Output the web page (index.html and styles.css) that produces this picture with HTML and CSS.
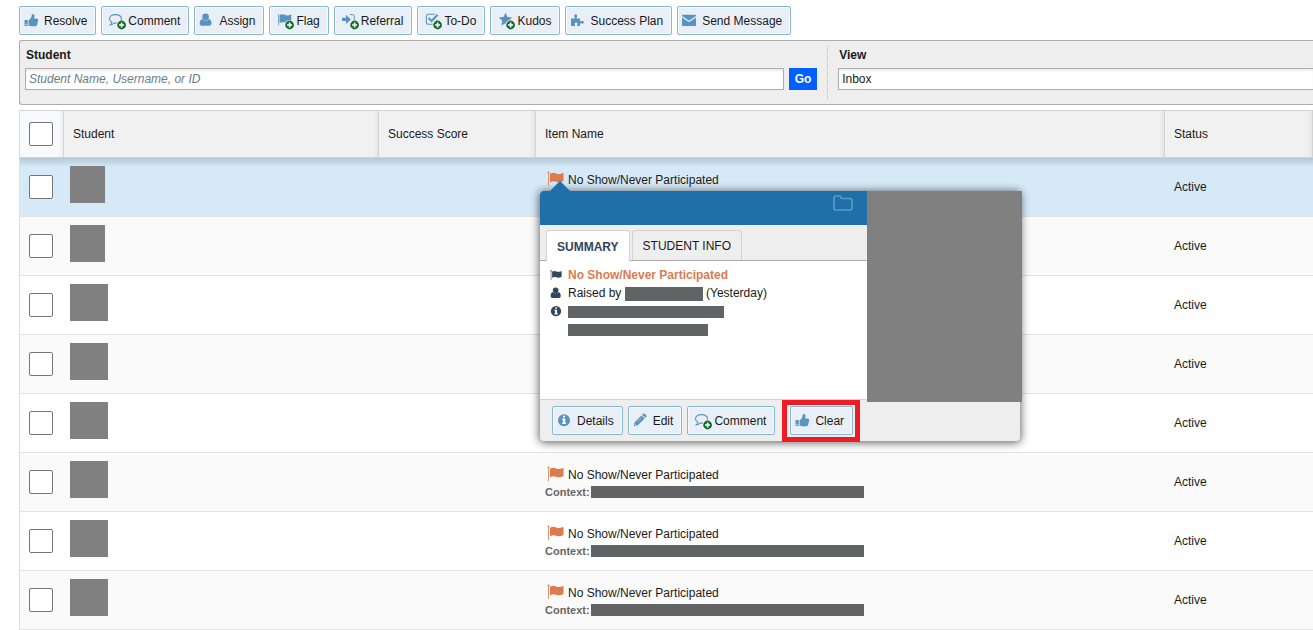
FILE: index.html
```html
<!DOCTYPE html>
<html lang="en">
<head>
  <meta charset="utf-8">
  <title>Tracking Items</title>
  <link rel="stylesheet" href="styles.css">
</head>
<body>

  <!-- Icon sprite -->
  <svg class="sprite" aria-hidden="true">
    <symbol id="i-thumb" viewBox="0 0 20 19">
      <path d="M.5 9.100h3.200v5.900H.5zM4.600 8.900C6.400 8.400 7 6.500 7.500 5.400 7.700 4.100 8 3.100 8.900 3.100c1.500 0 2 1.500 1.500 2.900l-.5 1.500h2.700c1.200 0 1.700.9 1.500 1.900l-1 4.300c-.2.900-.8 1.500-1.700 1.500H8.400c-1.500 0-2.300-.7-3.800-.8z"/>
      <circle cx="1.900" cy="13.500" r=".7" fill="#e8eff6"/>
    </symbol>
    <symbol id="i-user" viewBox="0 0 20 19">
      <circle cx="6.600" cy="5.900" r="3.300"/>
      <path d="M3.400 7.900c1.700 2 4.700 2 6.400 0 1.800.4 2.700 2.300 2.700 4.600 0 1.400-.8 2.200-2 2.200H2.700c-1.200 0-2-.8-2-2.200 0-2.300.9-4.200 2.700-4.600z"/>
    </symbol>
    <symbol id="i-puzzle" viewBox="0 0 20 19">
      <path d="M1 7.500h3.400c.5 0 .5-.5.3-1-.9-1.400-.3-3.200 1-3.200s1.900 1.800 1 3.200c-.2.500-.2 1 .3 1h3v2.500c0 .5.400.5.900.3 1.300-.8 3-.3 3 1s-1.700 1.900-3 1c-.5-.2-.9-.2-.9.300V15H7.300c-.4 0-.4-.4-.2-.8.700-1.300.3-2.600-1-2.600s-1.700 1.300-1 2.600c.2.400.2.800-.2.800H1z"/>
    </symbol>
    <symbol id="i-mail" viewBox="0 0 20 19">
      <path d="M0 5C0 4.200.5 3.700 1.200 3.700h11.600c.7 0 1.200.5 1.200 1.300L7.700 9.300c-.4.300-1 .3-1.400 0zM0 6.400l5.900 4.100c.7.500 1.500.5 2.200 0L14 6.400v7.300c0 .8-.5 1.300-1.200 1.300H1.200c-.7 0-1.200-.5-1.200-1.300z"/>
    </symbol>
    <symbol id="i-info" viewBox="0 0 20 19">
      <circle cx="7" cy="9.200" r="6"/>
      <path d="M6 4.800h2.200v1.700H6zM5.200 7.600h3v4H9V13H5.200v-1.400H6V9h-.8z" fill="#fff"/>
    </symbol>
    <symbol id="i-pencil" viewBox="0 0 20 19">
      <path d="M.8 15.200l.9-4 6.800-6.800 3.100 3.100-6.800 6.800zM9.200 3.700l.9-.9c.5-.5 1.100-.5 1.600 0l1.500 1.500c.5.5.5 1.100 0 1.600l-.9.900z"/>
      <path d="M4 11.200l4.500-4.500" stroke="#e8eff6" stroke-width=".5" fill="none"/>
      <path d="M1.900 12.900l1.200 1.200" stroke="#e8eff6" stroke-width=".8" fill="none"/>
    </symbol>
    <symbol id="i-plus" viewBox="0 0 22 19">
      <circle cx="15.600" cy="14" r="5" fill="#fff"/>
      <circle cx="15.600" cy="14" r="4.400" fill="#17692d"/>
      <path d="M13.100 14h5M15.600 11.500v5" stroke="#fff" stroke-width="1.600"/>
    </symbol>
    <symbol id="i-comment" viewBox="0 0 22 19">
      <path d="M9.500 3.600c-3.400 0-6 1.800-6 4.200 0 1.500 1 2.700 2.500 3.400-.2 1.100-.8 2-1.700 2.700 1.700-.1 3-.8 3.900-1.900 4.300.5 7.300-1.500 7.300-4.200 0-2.400-2.500-4.200-6-4.200z" fill="none" stroke="currentColor" stroke-width="1.100"/>
    </symbol>
    <symbol id="i-flag-sm" viewBox="0 0 22 19">
      <path d="M4 3h.9v11.500H4z" opacity=".8"/>
      <path d="M5.500 4.100c2.200-1.200 4-.9 5.800-.1 1.800.8 3.400.5 5.900-.8V11c-2.400 1.200-4.200 1.400-6 .6-1.800-.7-3.400-.7-5.700.5z"/>
    </symbol>
    <symbol id="i-signin" viewBox="0 0 22 19">
      <path d="M3 6.700h4V3.800l4.900 4.600L7 13v-2.900H3z"/>
      <path d="M11 3.600h2.800c.9 0 1.500.6 1.500 1.500v6.700c0 .9-.6 1.500-1.500 1.500H11" fill="none" stroke="currentColor" stroke-width="1"/>
    </symbol>
    <symbol id="i-check" viewBox="0 0 22 19">
      <path d="M14.500 8.600v3c0 1-.7 1.700-1.700 1.700H6.100c-1 0-1.700-.7-1.700-1.700V4.900c0-1 .7-1.700 1.700-1.700h6.700" fill="none" stroke="currentColor" stroke-width="1.100"/>
      <path d="M6.500 7l3.100 3 6-6.200" fill="none" stroke="currentColor" stroke-width="2"/>
    </symbol>
    <symbol id="i-star" viewBox="0 0 22 19">
      <path d="M10.500 1.800l2 4.200 4.600.6-3.400 3.200.8 4.600-4-2.200-4.100 2.200.8-4.600-3.300-3.200 4.600-.6z"/>
    </symbol>
    <symbol id="i-flag" viewBox="0 0 17 15">
      <circle cx="1.500" cy="1.500" r="1.100" opacity=".8"/>
      <path d="M1 1.500h1V15H1z" opacity=".8"/>
      <path d="M3 2.700c2.400-1.400 4.200-1.200 6-.3 2.200 1 4.500.8 7.500-.6v8.300c-2.900 1.400-5.300 1.600-7.500.6-1.800-.8-3.600-.8-6 .6z"/>
    </symbol>
    <symbol id="i-folder" viewBox="0 0 20 16">
      <path d="M1 3c0-1.100.9-2 2-2h3.200c1.100 0 1.700.9 1.700 2 0 .3.200.5.500.5H17c1.100 0 2 .9 2 2V13c0 1.100-.9 2-2 2H3c-1.100 0-2-.9-2-2z" fill="none" stroke="currentColor" stroke-width="1.700"/>
    </symbol>
  </svg>

  <main class="page">

    <!-- Action buttons -->
    <div class="toolbar">
      <button class="btn"><svg class="icon"><use href="#i-thumb"/></svg>Resolve</button>
      <button class="btn"><svg class="icon icon-add"><use href="#i-comment"/><use href="#i-plus"/></svg>Comment</button>
      <button class="btn"><svg class="icon"><use href="#i-user"/></svg>Assign</button>
      <button class="btn"><svg class="icon icon-add"><use href="#i-flag-sm"/><use href="#i-plus"/></svg>Flag</button>
      <button class="btn"><svg class="icon icon-add"><use href="#i-signin"/><use href="#i-plus"/></svg>Referral</button>
      <button class="btn"><svg class="icon icon-add"><use href="#i-check"/><use href="#i-plus"/></svg>To-Do</button>
      <button class="btn"><svg class="icon icon-add"><use href="#i-star"/><use href="#i-plus"/></svg>Kudos</button>
      <button class="btn"><svg class="icon"><use href="#i-puzzle"/></svg>Success Plan</button>
      <button class="btn"><svg class="icon"><use href="#i-mail"/></svg>Send Message</button>
    </div>

    <!-- Filters -->
    <form class="filters">
      <div class="filter">
        <label for="student">Student</label>
        <div class="search">
          <input type="text" id="student" placeholder="Student Name, Username, or ID">
          <button type="button" class="go-btn">Go</button>
        </div>
      </div>
      <div class="filter filter-view">
        <label for="view">View</label>
        <select id="view">
          <option>Inbox</option>
        </select>
      </div>
    </form>

    <!-- Items -->
    <table class="items">
      <colgroup>
        <col class="col-check">
        <col class="col-student">
        <col class="col-score">
        <col>
        <col class="col-status">
      </colgroup>
      <thead>
        <tr>
          <th class="check"><input type="checkbox" aria-label="Select all"></th>
          <th>Student</th>
          <th>Success Score</th>
          <th>Item Name</th>
          <th>Status</th>
        </tr>
      </thead>
      <tbody>
        <tr class="selected">
          <td class="check"><input type="checkbox" aria-label="Select row 1"></td>
          <td class="student"><div class="photo photo-small"></div></td>
          <td></td>
          <td class="item">
            <div class="item-name"><svg class="flag"><use href="#i-flag"/></svg>No Show/Never Participated</div>

            <!-- Flag card -->
            <div class="card">
              <div class="card-main">
                <div class="card-header"><svg class="folder"><use href="#i-folder"/></svg></div>
                <div class="tabs">
                  <button class="tab active">SUMMARY</button>
                  <button class="tab">STUDENT INFO</button>
                </div>
                <div class="summary">
                  <svg class="mini"><use href="#i-flag"/></svg>
                  <div class="summary-title">No Show/Never Participated</div>
                  <svg class="mini" viewBox="0 1 14 16"><use href="#i-user" width="20" height="19"/></svg>
                  <div>Raised by <span class="bar bar-name"></span> (Yesterday)</div>
                  <svg class="mini" viewBox="0 1 14 16"><use href="#i-info" width="20" height="19"/></svg>
                  <div><span class="bar bar-course"></span></div>
                  <div class="summary-more"><span class="bar bar-term"></span></div>
                </div>
              </div>
              <div class="card-photo"></div>
              <div class="card-footer">
                <button class="btn"><svg class="icon"><use href="#i-info"/></svg>Details</button>
                <button class="btn"><svg class="icon"><use href="#i-pencil"/></svg>Edit</button>
                <button class="btn"><svg class="icon icon-add"><use href="#i-comment"/><use href="#i-plus"/></svg>Comment</button>
                <span class="highlight"><button class="btn"><svg class="icon"><use href="#i-thumb"/></svg>Clear</button></span>
              </div>
            </div>
          </td>
          <td>Active</td>
        </tr>
        <tr>
          <td class="check"><input type="checkbox" aria-label="Select row 2"></td>
          <td class="student"><div class="photo photo-small"></div></td>
          <td></td>
          <td></td>
          <td>Active</td>
        </tr>
        <tr>
          <td class="check"><input type="checkbox" aria-label="Select row 3"></td>
          <td class="student"><div class="photo"></div></td>
          <td></td>
          <td></td>
          <td>Active</td>
        </tr>
        <tr>
          <td class="check"><input type="checkbox" aria-label="Select row 4"></td>
          <td class="student"><div class="photo"></div></td>
          <td></td>
          <td></td>
          <td>Active</td>
        </tr>
        <tr>
          <td class="check"><input type="checkbox" aria-label="Select row 5"></td>
          <td class="student"><div class="photo"></div></td>
          <td></td>
          <td></td>
          <td>Active</td>
        </tr>
        <tr>
          <td class="check"><input type="checkbox" aria-label="Select row 6"></td>
          <td class="student"><div class="photo"></div></td>
          <td></td>
          <td class="item">
            <div class="item-name"><svg class="flag"><use href="#i-flag"/></svg>No Show/Never Participated</div>
            <div class="context">Context: <span class="bar bar-context"></span></div>
          </td>
          <td>Active</td>
        </tr>
        <tr>
          <td class="check"><input type="checkbox" aria-label="Select row 7"></td>
          <td class="student"><div class="photo"></div></td>
          <td></td>
          <td class="item">
            <div class="item-name"><svg class="flag"><use href="#i-flag"/></svg>No Show/Never Participated</div>
            <div class="context">Context: <span class="bar bar-context"></span></div>
          </td>
          <td>Active</td>
        </tr>
        <tr>
          <td class="check"><input type="checkbox" aria-label="Select row 8"></td>
          <td class="student"><div class="photo"></div></td>
          <td></td>
          <td class="item">
            <div class="item-name"><svg class="flag"><use href="#i-flag"/></svg>No Show/Never Participated</div>
            <div class="context">Context: <span class="bar bar-context"></span></div>
          </td>
          <td>Active</td>
        </tr>
      </tbody>
    </table>

  </main>

</body>
</html>
```
FILE: styles.css
```css
* {
  box-sizing: border-box;
}

body {
  margin: 0;
  background-color: #fff;
  color: #1a1a1a;
  font-family: "Liberation Sans", Arial, sans-serif;
  font-size: 12px;
  line-height: 18px;
}

button, input, select {
  font: inherit;
  color: inherit;
  margin: 0;
}

svg {
  fill: currentColor;
  flex: none;
}

.sprite {
  position: absolute;
  width: 0;
  height: 0;
}

.page {
  padding: 6px 0 0 19px;
}

/* Buttons */
.toolbar {
  display: flex;
  gap: 5px;
  margin-bottom: 5px;
}

.btn {
  display: flex;
  align-items: center;
  height: 29px;
  padding: 0 8px 0 4px;
  border: 1px solid #8ab6d1;
  border-radius: 2px;
  background-color: #e8eff6;
  box-shadow: inset 0 0 0 1px #f6fafd;
  white-space: nowrap;
  cursor: pointer;
}

.btn:hover {
  background-color: #d9e7f2;
}

.icon {
  width: 20px;
  height: 19px;
  color: #5894bf;
}

.icon-add {
  width: 22px;
}

/* Filters */
.filters {
  display: grid;
  grid-template-columns: 5fr 3fr;
  padding: 5px 0;
  margin-bottom: 5px;
  border: 1px solid #acacac;
  border-right: none;
  border-radius: 3px 0 0 3px;
  background-color: #eee;
}

.filter {
  padding: 0 10px 9px 5px;
  border-right: 1px dotted #bbb;
}

.filter-view {
  padding: 0 0 9px 10px;
  border-right: none;
}

.filter label {
  display: block;
  margin-bottom: 4px;
  padding-left: 1px;
  font-weight: bold;
}

.search {
  display: flex;
  gap: 5px;
}

.filter input, .filter select {
  flex: 1;
  height: 22px;
  padding: 0 3px;
  border: 1px solid #acacac;
  border-radius: 0;
  background-color: #fff;
  box-shadow: inset 0 2px 2px #eee;
}

.filter input::placeholder {
  color: #6b7c87;
  font-style: italic;
}

.filter select {
  display: block;
  width: 100%;
  border-right: none;
  appearance: none;
}

.go-btn {
  width: 28px;
  padding: 0;
  border: none;
  background-color: #0060ff;
  color: #fff;
  font-weight: bold;
  cursor: pointer;
}

/* Items table */
.items {
  width: 100%;
  table-layout: fixed;
  border-collapse: separate;
  border-spacing: 0;
  border-left: 1px solid #ddd;
}

.col-check { width: 44px; }
.col-student { width: 315px; }
.col-score { width: 157px; }
.col-status { width: 148px; }

.items th {
  height: 48px;
  padding: 0 9px;
  border: solid #d3d3d3;
  border-width: 1px 1px 1px 0;
  background-color: #f1f1f1;
  background-image: linear-gradient(to left, rgba(0, 0, 0, 0.05), transparent 5px);
  font-weight: normal;
  text-align: left;
}

.items th.check {
  background-color: #f8fafd;
}

.items td {
  height: 59px;
  padding: 0 9px;
  border-bottom: 1px solid #e3e3e3;
}

.items tbody tr:nth-child(even) td {
  background-color: #fafafa;
}

.items .selected td {
  background-color: #d6e9f7;
  background-image: linear-gradient(#b5c8d5, #d6e9f7 9px);
}

.items .check input {
  display: block;
  width: 24px;
  height: 24px;
  border: 1px solid #767676;
  border-radius: 2px;
  background-color: #fff;
  appearance: none;
}

.items .check input:checked {
  background-color: #1f6fa8;
}

.items .student {
  padding: 8px 6px 0;
  vertical-align: top;
}

.photo {
  width: 38px;
  height: 37px;
  background-color: #808080;
}

.photo-small {
  width: 35px;
}

.items .item {
  position: relative;
  padding-top: 13px;
  vertical-align: top;
}

.item-name {
  display: flex;
  gap: 4px;
}

.flag {
  width: 17px;
  height: 15px;
  margin-left: 2px;
  color: #dc7b4f;
}

.context {
  display: flex;
  align-items: center;
  gap: 1px;
  height: 16px;
  color: #666;
  font-size: 11px;
  font-weight: bold;
}

/* Redacted text */
.bar {
  display: inline-block;
  height: 12px;
  background-color: #626365;
  vertical-align: middle;
}

.bar-context { width: 273px; }
.bar-name { width: 78px; height: 14px; }
.bar-course { width: 156px; }
.bar-term { width: 140px; }

/* Flag card */
.card {
  position: absolute;
  z-index: 1;
  top: 33px;
  left: 4px;
  width: 480px;
  border-radius: 4px;
  background-color: #eee;
  box-shadow: 0 1px 8px 1px rgba(0, 0, 0, 0.6);
}

.card::before {
  content: "";
  position: absolute;
  top: -10px;
  left: 10px;
  border: solid transparent;
  border-width: 0 10px 10px;
  border-bottom-color: #1f6fa8;
}

.card-main {
  width: 327px;
}

.card-header {
  display: flex;
  justify-content: flex-end;
  height: 34px;
  padding: 4px 14px;
  border-radius: 4px 0 0 0;
  background-color: #1f6fa8;
}

.folder {
  width: 20px;
  height: 16px;
  color: #5b9ac5;
}

.tabs {
  display: flex;
  gap: 2px;
  height: 36px;
  padding: 5px 6px 0;
  border-bottom: 1px solid #acacac;
}

.tab {
  height: 30px;
  padding: 1px 10px 0;
  border: 1px solid #d3d3d3;
  border-bottom: none;
  border-radius: 3px 3px 0 0;
  background-color: #eee;
  white-space: nowrap;
  cursor: pointer;
}

.tab.active {
  height: 31px;
  background-color: #fff;
  color: #30455e;
  font-weight: bold;
}

.summary {
  display: grid;
  grid-template-columns: 13px 1fr;
  grid-auto-rows: 18px;
  column-gap: 5px;
  align-items: center;
  height: 138px;
  padding: 5px 10px;
  background-color: #fff;
}

.summary-title {
  color: #dc7b4f;
  font-weight: bold;
}

.summary-more {
  grid-column: 2;
}

.mini {
  width: 12px;
  height: 14px;
  color: #30455e;
}

.card-photo {
  position: absolute;
  top: 0;
  right: -2px;
  width: 155px;
  height: 211px;
  background-color: #808080;
}

.card-footer {
  display: flex;
  gap: 5px;
  padding: 6px 12px;
  border-top: 1px solid #d3d3d3;
}

/* Red frame around Clear */
.highlight {
  position: relative;
  margin-left: 10px;
}

.highlight::after {
  content: "";
  position: absolute;
  inset: -6px -7px -7px -8px;
  border: 5px solid #ee1c24;
  pointer-events: none;
}
```
